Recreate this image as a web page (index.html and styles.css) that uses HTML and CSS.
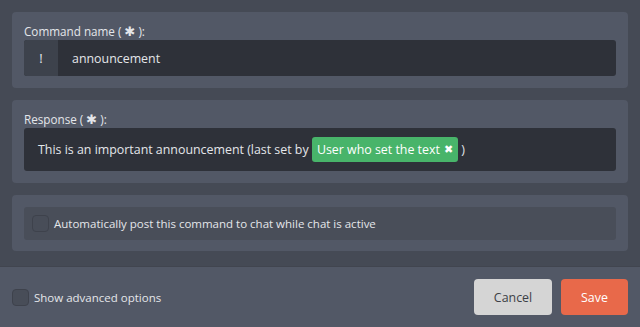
FILE: index.html
```
<!DOCTYPE html>
<html>
<head>
<meta charset="utf-8">
<link rel="stylesheet" href="styles.css">
</head>
<body>
<div class="content">
  <div class="card">
    <div class="label">Command name ( <span class="req">✱</span> ):</div>
    <div class="input">
      <div class="prefix">!</div>
      <div class="value">announcement</div>
    </div>
  </div>
  <div class="card">
    <div class="label">Response ( <span class="req">✱</span> ):</div>
    <div class="input resp">
      <div class="value">This is an important announcement (last set by <span class="chip">User who set the text <span class="x">✖</span></span> )</div>
    </div>
  </div>
  <div class="card card3">
    <div class="row">
      <span class="box"></span>
      <span class="rowtext">Automatically post this command to chat while chat is active</span>
    </div>
  </div>
</div>
<div class="footer">
  <label class="adv"><span class="box"></span><span>Show advanced options</span></label>
  <div class="buttons">
    <button class="btn cancel">Cancel</button>
    <button class="btn save">Save</button>
  </div>
</div>
</body>
</html>
```
FILE: styles.css
```
html, body {
  margin: 0;
  padding: 0;
}
body {
  width: 640px;
  height: 327px;
  background: #454a55;
  font-family: "Open Sans", "Noto Sans", sans-serif;
  font-size: 11.5px;
  color: #e4e6ea;
  overflow: hidden;
  display: flex;
  flex-direction: column;
}
.content {
  padding: 12px 12px 0 12px;
  display: flex;
  flex-direction: column;
  gap: 12px;
  height: 254px;
}
.card {
  background: #525866;
  border-radius: 4px;
  padding: 10px 12px 12px 12px;
}
.label {
  line-height: 18px;
  height: 18px;
  font-size: 11.7px;
}
.req {
  font-size: 13px;
  font-family: "DejaVu Sans", sans-serif;
}
.input {
  display: flex;
  background: #2e3139;
  border-radius: 3px;
  height: 36px;
  align-items: stretch;
}
.prefix {
  width: 34px;
  background: #3d424c;
  border-radius: 3px 0 0 3px;
  display: flex;
  align-items: center;
  justify-content: center;
  font-size: 13px;
}
.value {
  display: flex;
  align-items: center;
  padding-left: 14px;
  font-size: 12.4px;
}
.resp {
  height: 43px;
}
.resp .value {
  display: block;
  line-height: 43px;
}
.chip {
  display: inline-block;
  background: #48b46a;
  color: #ffffff;
  border-radius: 3px;
  padding: 0 5px;
  line-height: 25px;
  height: 25px;
}
.x {
  font-size: 10.5px;
  margin-left: 1px;
  position: relative;
  top: -1px;
}
.card3 {
  padding: 12px 12px 11px 12px;
}
.row {
  background: #494e59;
  border-radius: 3px;
  height: 33px;
  display: flex;
  align-items: center;
  padding-left: 8px;
  gap: 5px;
}
.box {
  width: 15px;
  height: 15px;
  border: 1px solid #3e424c;
  background: #484d58;
  border-radius: 4px;
  display: inline-block;
  flex: none;
}
.footer {
  flex: 1;
  background: #525866;
  border-top: 1px solid #41454f;
  display: flex;
  align-items: center;
  justify-content: space-between;
  padding: 0 12px;
}
.adv {
  display: flex;
  align-items: center;
  gap: 5px;
}
.buttons {
  display: flex;
  gap: 9px;
}
.btn {
  font-family: "Open Sans", "Noto Sans", sans-serif;
  font-size: 12.4px;
  border: none;
  border-radius: 4px;
  height: 36px;
}
.cancel {
  width: 78px;
  background: #d5d5d5;
  color: #3c3f46;
}
.save {
  width: 67px;
  background: #e8694a;
  color: #ffffff;
}
```
